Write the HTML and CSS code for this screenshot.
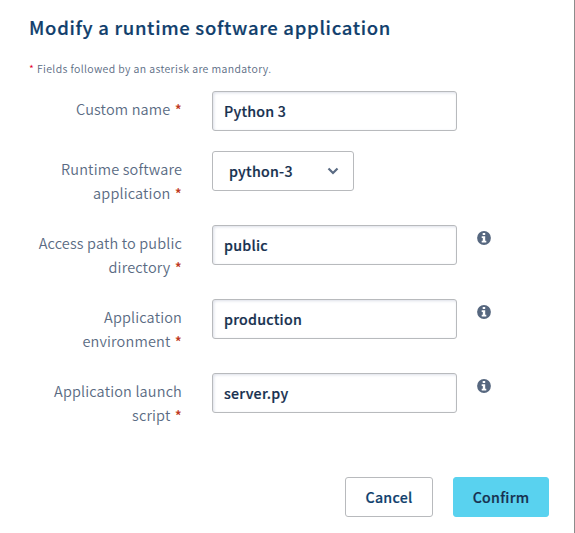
FILE: index.html
```html
<!DOCTYPE html>
<html lang="en">
<head>
<meta charset="utf-8">
<title>Modify a runtime software application</title>
<link rel="stylesheet" href="styles.css">
</head>
<body>
<main class="panel">
  <h1 class="title">Modify a runtime software application</h1>
  <p class="note"><span class="star">*</span> Fields followed by an asterisk are mandatory.</p>
  <form class="form">
    <div class="row row-single">
      <label class="label" for="name">Custom name <span class="req">*</span></label>
      <input class="input" id="name" type="text" value="Python 3">
    </div>
    <div class="row">
      <label class="label" for="runtime">Runtime software<br>application <span class="req">*</span></label>
      <button class="select" id="runtime" type="button">python-3
        <svg class="chevron" viewBox="0 0 12 8"><path d="M1.500 1.500 6 6l4.500-4.500"/></svg>
      </button>
    </div>
    <div class="row">
      <label class="label" for="path">Access path to public<br>directory <span class="req">*</span></label>
      <input class="input" id="path" type="text" value="public">
      <svg class="info" viewBox="0 0 14 14"><circle cx="7" cy="7" r="6.900"/><path d="M5.700 2h2.500v2.100H5.700zM4.700 5.200h3.500v4.500h1.100v1.800H4.700V9.700h1.100V7H4.700z"/></svg>
    </div>
    <div class="row">
      <label class="label" for="env">Application<br>environment <span class="req">*</span></label>
      <input class="input" id="env" type="text" value="production">
      <svg class="info" viewBox="0 0 14 14"><circle cx="7" cy="7" r="6.900"/><path d="M5.700 2h2.500v2.100H5.700zM4.700 5.200h3.500v4.500h1.100v1.800H4.700V9.700h1.100V7H4.700z"/></svg>
    </div>
    <div class="row">
      <label class="label" for="script">Application launch<br>script <span class="req">*</span></label>
      <input class="input" id="script" type="text" value="server.py">
      <svg class="info" viewBox="0 0 14 14"><circle cx="7" cy="7" r="6.900"/><path d="M5.700 2h2.500v2.100H5.700zM4.700 5.200h3.500v4.500h1.100v1.800H4.700V9.700h1.100V7H4.700z"/></svg>
    </div>
    <div class="actions">
      <button class="btn btn-cancel" type="button">Cancel</button>
      <button class="btn btn-confirm" type="button">Confirm</button>
    </div>
  </form>
</main>
</body>
</html>
```

FILE: styles.css
```css
* { box-sizing: border-box; }

body {
  margin: 0;
  background: #fff;
  font-family: "Noto Sans CJK JP", "Open Sans", sans-serif;
  color: #5a6b83;
}

.panel {
  height: 533px;
  padding: 11px 25px 0 29px;
  border-right: 1px solid #8c8c8c;
  overflow: hidden;
}

.title {
  margin: 0;
  font-size: 18.5px;
  line-height: 32px;
  font-weight: 500;
  letter-spacing: 0.7px;
  color: #113f6d;
  white-space: nowrap;
  -webkit-text-stroke: 0.2px #113f6d;
}

.note {
  margin: 16px 0 12px;
  font-size: 10.5px;
  line-height: 20px;
  font-weight: 350;
  letter-spacing: 0.37px;
}

.star { color: #e4002b; }
.req { position: relative; top: 1px; margin-left: 1px; color: #bf3a1e; font-weight: 500; }

.row {
  display: grid;
  grid-template-columns: 153px 275px 64px;
  height: 74px;
}

.row-single { height: 60px; }

.label {
  padding-top: 6px;
  font-size: 14.5px;
  line-height: 24px;
  font-weight: 350;
  letter-spacing: 0.15px;
  text-align: right;
  white-space: nowrap;
}

.input, .select { margin-left: 30px; }

.input {
  width: 245px;
  height: 40px;
  padding: 0 11px;
  border: 1px solid #b8babd;
  border-radius: 3px;
  box-shadow: inset 1px 1px 3px #dcdfe8;
  background: #fff;
}

.input, .select, .btn {
  font-family: inherit;
  font-size: 14.2px;
  font-weight: 500;
  letter-spacing: 0.25px;
  color: #17304f;
  -webkit-text-stroke: 0.2px currentColor;
}

.select {
  display: flex;
  align-items: center;
  justify-content: space-between;
  width: 142px;
  height: 40px;
  padding: 0 14px 0 16px;
  border: 1px solid #b8babd;
  border-radius: 3px;
  background: #fff;
}

.chevron {
  width: 12px;
  height: 8px;
  fill: none;
  stroke: #5a6b83;
  stroke-width: 2.2;
}

.info {
  width: 14px;
  height: 14px;
  margin: 6px 0 0 20px;
  fill: #56677f;
}

.info path { fill: #fff; }

.actions {
  display: flex;
  justify-content: flex-end;
  gap: 20px;
  margin-top: 30px;
}

.btn {
  height: 40px;
  padding: 0;
  border: 1px solid #b8babd;
  border-radius: 3px;
  background: #fff;
}

.btn-cancel { width: 88px; color: #113f6d; }
.btn-confirm { width: 96px; border-color: #59d2ef; background: #59d2ef; }
```
